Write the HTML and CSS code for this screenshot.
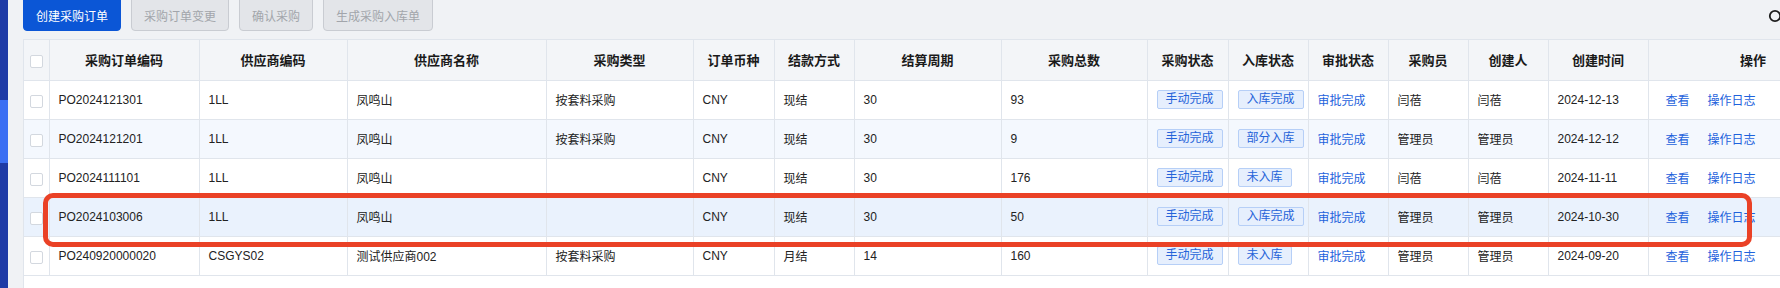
FILE: index.html
```html
<!DOCTYPE html>
<html lang="zh-CN">
<head>
    <meta charset="UTF-8">
    <meta name="viewport" content="width=device-width, initial-scale=1.0">
    <title>采购订单</title>
    <link rel="stylesheet" href="styles.css">
</head>
<body>
    <div class="side-bar">
        <div class="side-active"></div>
    </div>
    <div class="main">
        <div class="toolbar">
            <button class="btn btn-primary">创建采购订单</button>
            <button class="btn" disabled>采购订单变更</button>
            <button class="btn" disabled>确认采购</button>
            <button class="btn" disabled>生成采购入库单</button>
        </div>
        <svg class="refresh" width="14" height="14" viewBox="0 0 14 14">
            <circle cx="7" cy="7" r="5.2" fill="none" stroke="#1c1c1c" stroke-width="1.8"/>
        </svg>

        <div class="table-wrap">
            <table class="grid">
                <colgroup>
                    <col style="width:25px"><col style="width:150px"><col style="width:148px">
                    <col style="width:199px"><col style="width:147px"><col style="width:81px">
                    <col style="width:80px"><col style="width:147px"><col style="width:146px">
                    <col style="width:81px"><col style="width:80px"><col style="width:80px">
                    <col style="width:80px"><col style="width:80px"><col style="width:100px">
                    <col style="width:210px">
                </colgroup>
                <thead>
                    <tr>
                        <th><span class="check"></span></th>
                        <th>采购订单编码</th>
                        <th>供应商编码</th>
                        <th>供应商名称</th>
                        <th>采购类型</th>
                        <th>订单币种</th>
                        <th>结款方式</th>
                        <th>结算周期</th>
                        <th>采购总数</th>
                        <th>采购状态</th>
                        <th>入库状态</th>
                        <th>审批状态</th>
                        <th>采购员</th>
                        <th>创建人</th>
                        <th>创建时间</th>
                        <th>操作</th>
                    </tr>
                </thead>
                <tbody>
                    <tr>
                        <td><span class="check"></span></td>
                        <td>PO2024121301</td>
                        <td>1LL</td>
                        <td>凤鸣山</td>
                        <td>按套料采购</td>
                        <td>CNY</td>
                        <td>现结</td>
                        <td>30</td>
                        <td>93</td>
                        <td><span class="tag">手动完成</span></td>
                        <td><span class="tag">入库完成</span></td>
                        <td class="blue">审批完成</td>
                        <td>闫蓓</td>
                        <td>闫蓓</td>
                        <td>2024-12-13</td>
                        <td class="ops"><a>查看</a><a>操作日志</a></td>
                    </tr>
                    <tr class="stripe">
                        <td><span class="check"></span></td>
                        <td>PO2024121201</td>
                        <td>1LL</td>
                        <td>凤鸣山</td>
                        <td>按套料采购</td>
                        <td>CNY</td>
                        <td>现结</td>
                        <td>30</td>
                        <td>9</td>
                        <td><span class="tag">手动完成</span></td>
                        <td><span class="tag">部分入库</span></td>
                        <td class="blue">审批完成</td>
                        <td>管理员</td>
                        <td>管理员</td>
                        <td>2024-12-12</td>
                        <td class="ops"><a>查看</a><a>操作日志</a></td>
                    </tr>
                    <tr>
                        <td><span class="check"></span></td>
                        <td>PO2024111101</td>
                        <td>1LL</td>
                        <td>凤鸣山</td>
                        <td></td>
                        <td>CNY</td>
                        <td>现结</td>
                        <td>30</td>
                        <td>176</td>
                        <td><span class="tag">手动完成</span></td>
                        <td><span class="tag">未入库</span></td>
                        <td class="blue">审批完成</td>
                        <td>闫蓓</td>
                        <td>闫蓓</td>
                        <td>2024-11-11</td>
                        <td class="ops"><a>查看</a><a>操作日志</a></td>
                    </tr>
                    <tr class="current">
                        <td><span class="check"></span></td>
                        <td>PO2024103006</td>
                        <td>1LL</td>
                        <td>凤鸣山</td>
                        <td></td>
                        <td>CNY</td>
                        <td>现结</td>
                        <td>30</td>
                        <td>50</td>
                        <td><span class="tag">手动完成</span></td>
                        <td><span class="tag">入库完成</span></td>
                        <td class="blue">审批完成</td>
                        <td>管理员</td>
                        <td>管理员</td>
                        <td>2024-10-30</td>
                        <td class="ops"><a>查看</a><a>操作日志</a></td>
                    </tr>
                    <tr>
                        <td><span class="check"></span></td>
                        <td>PO240920000020</td>
                        <td>CSGYS02</td>
                        <td>测试供应商002</td>
                        <td>按套料采购</td>
                        <td>CNY</td>
                        <td>月结</td>
                        <td>14</td>
                        <td>160</td>
                        <td><span class="tag">手动完成</span></td>
                        <td><span class="tag">未入库</span></td>
                        <td class="blue">审批完成</td>
                        <td>管理员</td>
                        <td>管理员</td>
                        <td>2024-09-20</td>
                        <td class="ops"><a>查看</a><a>操作日志</a></td>
                    </tr>
                </tbody>
            </table>
        </div>
    </div>

    <!-- red annotation box drawn over the 4th row -->
    <div class="mark"></div>
</body>
</html>
```

FILE: styles.css
```css
*{
    margin: 0;
    padding: 0;
    box-sizing: border-box;
}
html, body{
    height: 100%;
    overflow: hidden;
}
body{
    display: flex;
    background: #f0f2f5;
    font-family: "Liberation Sans", "Noto Sans CJK SC", sans-serif;
    font-size: 12px;
    color: #222;
}
.side-bar{
    width: 8px;
    flex-shrink: 0;
    background: #1f3ba6;
    padding-top: 100px;
}
.side-bar .side-active{
    height: 63px;
    background: #3b6ff3;
}
.main{
    flex: 1;
    min-width: 0;
    padding-left: 15px;
    display: flex;
    flex-direction: column;
    position: relative;
}
.toolbar{
    display: flex;
    gap: 10px;
    margin-top: -4px;
    margin-bottom: 8px;
}
.btn{
    height: 35px;
    padding: 0 12px;
    font-family: inherit;
    font-size: 12px;
    border-radius: 4px;
    border: 1px solid #c9ccd2;
    background: #e3e5e9;
    color: #a2a5ab;
    padding-top: 4px;
}
.btn-primary{
    background: #0b56d6;
    border-color: #0b56d6;
    color: #fff;
}
.refresh{
    position: absolute;
    top: 9px;
    left: 1760px;
}
.table-wrap{
    flex: 1;
    background: #fff;
    border-top: 1px solid #e0e5ec;
    border-left: 1px solid #e0e5ec;
    overflow: hidden;
}
.grid{
    table-layout: fixed;
    border-collapse: collapse;
    width: 1834px;
}
.grid th, .grid td{
    border-right: 1px solid #e0e5ec;
    border-bottom: 1px solid #e0e5ec;
    padding: 0 9px;
    white-space: nowrap;
    overflow: hidden;
    vertical-align: middle;
}
.grid th{
    height: 40px;
    background: #f3f5f8;
    font-size: 13px;
    font-weight: bold;
    color: #1a1a1a;
    text-align: center;
}
.grid td{
    height: 39px;
    text-align: left;
}
.grid th:first-child, .grid td:first-child{
    padding: 0;
    text-align: center;
}
.grid tr.stripe td{
    background: #f4f8fe;
}
.grid tr.current td{
    background: #eaf2fd;
}
.check{
    display: inline-block;
    width: 13px;
    height: 13px;
    border: 1px solid #d3d8df;
    border-radius: 2px;
    background: #fff;
    vertical-align: middle;
    margin-top: 3px;
    margin-left: 1px;
}
.tag{
    display: inline-block;
    height: 19px;
    line-height: 17px;
    padding: 0 8px;
    border: 1px solid #b6cff7;
    border-radius: 2px;
    background: #e6effd;
    color: #2563d9;
}
.blue{
    color: #1e62dc;
}
.grid td.ops{
    padding-left: 17px;
}
.ops a{
    color: #1e62dc;
    margin-right: 18px;
    cursor: pointer;
}
.mark{
    position: absolute;
    left: 43px;
    top: 193px;
    width: 1709px;
    height: 54px;
    border: 5px solid #ea4126;
    border-radius: 10px;
}
```
